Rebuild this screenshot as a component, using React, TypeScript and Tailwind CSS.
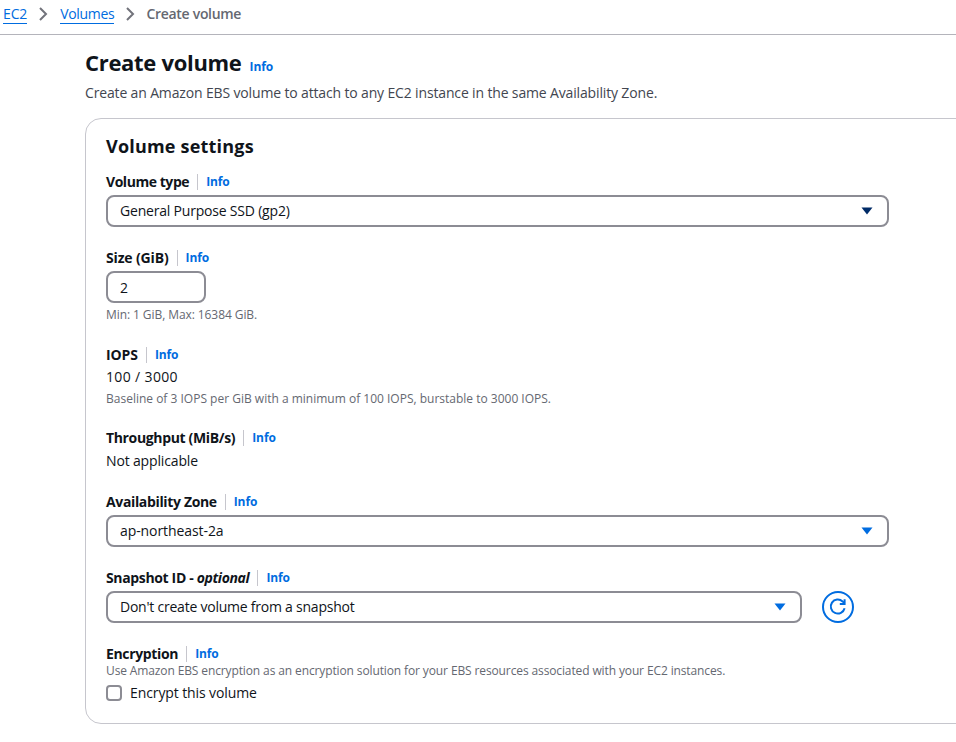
import { ReactNode } from 'react'

const Info = ({ className = '' }: { className?: string }) => (
  <span className={`text-[12px] font-bold leading-[16px] tracking-[-0.1px] text-[#006ce0] ${className}`}>Info</span>
)

function Label({ children, className = 'tracking-[-0.35px]' }: { children: ReactNode; className?: string }) {
  return (
    <div className="flex h-[22px] items-center">
      <span className={`text-[14px] font-bold leading-[22px] text-[#0f141a] ${className}`}>{children}</span>
      <span className="mx-[8px] h-[16px] w-px bg-[#c6c6cd]" />
      <Info />
    </div>
  )
}

function Caret({ color }: { color: string }) {
  return (
    <svg width="12" height="8" viewBox="0 0 12 8" className="shrink-0">
      <path d="M0.5 0.5H11.5L6 7.5Z" fill={color} />
    </svg>
  )
}

function Select({ value, caret = '#006ce0', className = '', textClass = 'tracking-[-0.15px]' }: { value: string; caret?: string; className?: string; textClass?: string }) {
  return (
    <div className={`flex h-[32px] items-center justify-between rounded-[8px] border-2 border-[#8c8c94] bg-white pl-[12px] pr-[14px] ${className}`}>
      <span className={`text-[14px] leading-[22px] text-[#0f141a] ${textClass}`}>{value}</span>
      <Caret color={caret} />
    </div>
  )
}

const Hint = ({ children, className = 'tracking-[-0.12px]' }: { children: ReactNode; className?: string }) => (
  <div className={`text-[12px] leading-[18px] text-[#656871] ${className}`}>{children}</div>
)

const Chevron = ({ className }: { className: string }) => (
  <svg width="16" height="16" viewBox="0 0 16 16" fill="none" stroke="#72737b" strokeWidth="2" className={className}>
    <path d="M5 2l6 6-6 6" />
  </svg>
)

function RefreshButton() {
  return (
    <div className="flex h-[32px] w-[32px] items-center justify-center rounded-full border-2 border-[#006ce0]">
      <svg width="20" height="20" viewBox="0 0 20 20" fill="none" stroke="#006ce0" strokeWidth="2">
        <path d="M16.6 11.2A7 7 0 1 1 14.6 4.4L16.4 6.2" />
        <path d="M16.6 2.2V7H11.8" />
      </svg>
    </div>
  )
}

export default function App() {
  return (
    <div className="h-[742px] w-[956px] overflow-hidden bg-white font-['Open_Sans',sans-serif]">
      <nav className="flex h-[35px] items-center border-b border-[#b4b4bb] pb-[6px] pl-[3px] text-[14px] leading-[22px] tracking-[-0.15px]">
        <a className="border-b border-[#006ce0] leading-[18px] text-[#006ce0]">EC2</a>
        <Chevron className="ml-[8px] mr-[9px]" />
        <a className="border-b border-[#006ce0] leading-[18px] tracking-[-0.3px] text-[#006ce0]">Volumes</a>
        <Chevron className="ml-[8px] mr-[8px]" />
        <span className="font-semibold tracking-[-0.3px] text-[#656871]">Create volume</span>
      </nav>

      <main className="pl-[85px]">
        <div className="flex items-baseline gap-[8px] pt-[10px]">
          <h1 className="text-[22px] font-bold leading-[34px] tracking-[-0.3px] text-[#0f141a]">Create volume</h1>
          <Info />
        </div>
        <p className="mt-[3px] text-[14px] leading-[22px] tracking-[-0.15px] text-[#424650]">
          Create an Amazon EBS volume to attach to any EC2 instance in the same Availability Zone.
        </p>

        <section className="mt-[14px] flex w-[900px] flex-col gap-[20px] rounded-[16px] border border-[#c6c6cd] pb-[19px] pl-[20px] pt-[11px]">
          <div>
            <h2 className="mb-[9px] text-[18px] font-bold leading-[32px] tracking-[0.2px] text-[#0f141a]">Volume settings</h2>
            <div className="mb-[2px]"><Label className="tracking-[-0.45px]">Volume type</Label></div>
            <Select value="General Purpose SSD (gp2)" caret="#002a66" className="w-[783px]" textClass="tracking-[-0.2px]" />
          </div>

          <div>
            <div className="mb-[2px]"><Label className="tracking-[-0.15px]">Size (GiB)</Label></div>
            <div className="flex h-[32px] w-[100px] items-center rounded-[8px] border-2 border-[#8c8c94] pl-[12px] text-[14px] text-[#0f141a]">2</div>
            <div className="mt-[3px]"><Hint className="tracking-[-0.08px]">Min: 1 GiB, Max: 16384 GiB.</Hint></div>
          </div>

          <div>
            <Label className="tracking-[-0.1px]">IOPS</Label>
            <div className="text-[14px] leading-[22px] tracking-[0.35px] text-[#0f141a]">100 / 3000</div>
            <div className="mt-[2px]"><Hint className="tracking-normal">Baseline of 3 IOPS per GiB with a minimum of 100 IOPS, burstable to 3000 IOPS.</Hint></div>
          </div>

          <div className="-mt-[1px]">
            <Label>Throughput (MiB/s)</Label>
            <div className="mt-[1px] text-[14px] leading-[22px] tracking-[-0.15px] text-[#0f141a]">Not applicable</div>
          </div>

          <div className="-mt-[1px]">
            <div className="mb-[2px]"><Label>Availability Zone</Label></div>
            <Select value="ap-northeast-2a" className="w-[783px]" textClass="tracking-[-0.08px]" />
          </div>

          <div>
            <div className="mb-[2px]"><Label>Snapshot ID - <i>optional</i></Label></div>
            <div className="flex items-center gap-[20px]">
              <Select value="Don't create volume from a snapshot" className="w-[696px]" textClass="tracking-[-0.23px]" />
              <RefreshButton />
            </div>
          </div>

          <div>
            <Label>Encryption</Label>
            <div className="-mt-[3px]"><Hint>Use Amazon EBS encryption as an encryption solution for your EBS resources associated with your EC2 instances.</Hint></div>
            <div className="mt-[2px] flex h-[22px] items-center gap-[8px]">
              <span className="h-[16px] w-[16px] rounded-[4px] border-2 border-[#8c8c94]" />
              <span className="text-[14px] leading-[22px] tracking-[-0.1px] text-[#0f141a]">Encrypt this volume</span>
            </div>
          </div>
        </section>
      </main>
    </div>
  )
}
